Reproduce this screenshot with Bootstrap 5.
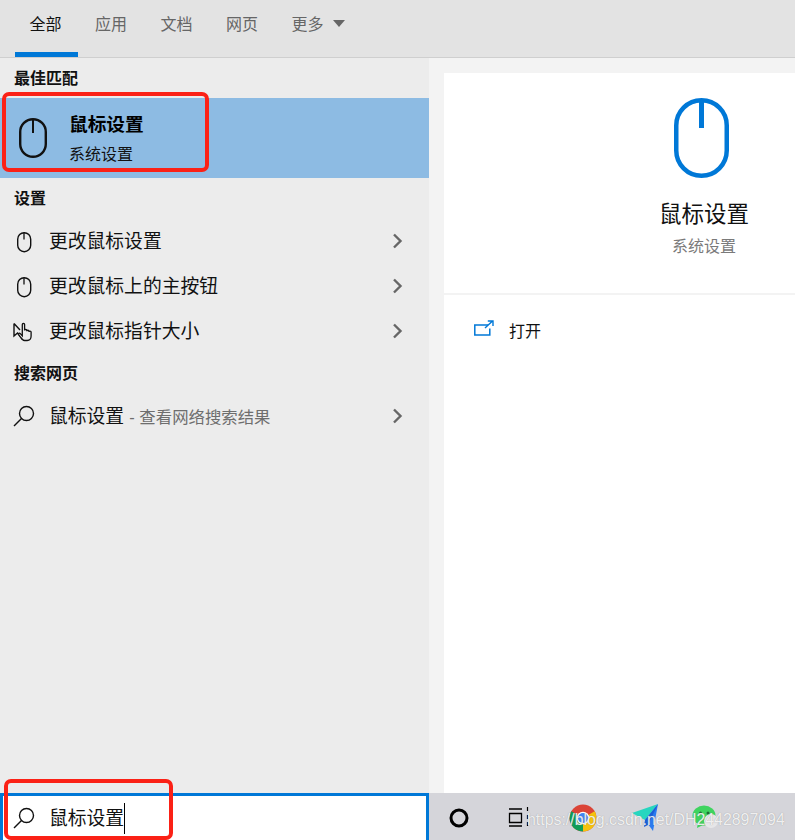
<!doctype html>
<html lang="zh-CN">
<head>
<meta charset="utf-8">
<title>鼠标设置</title>
<link href="https://cdn.jsdelivr.net/npm/bootstrap@5.3.0/dist/css/bootstrap.min.css" rel="stylesheet">
<style>
html,body{margin:0;height:840px;overflow:hidden;background:#f3f3f3;}
body{font-family:"Liberation Sans","Noto Sans CJK SC",sans-serif;color:#111;}
.shell{width:795px;height:840px;overflow:hidden;}
.tabbar{height:58px;background:#e3e3e3;border-bottom:1px solid #cfcfcf;padding-left:15px;gap:2.500px;}
.tabitem{width:63px;height:57px;padding:14px 2px 0 0;text-align:center;font-size:16px;line-height:21px;color:#666;flex:none;}
.tabitem.on{color:#111;border-bottom:5px solid #0078d7;}
.tabmore{width:auto;padding-left:14.500px;}
.caret-tri{display:inline-block;border-left:6px solid transparent;border-right:6px solid transparent;border-top:7px solid #666;margin-left:9px;vertical-align:3px;}
.mainarea{height:782px;}
.leftcol{width:429px;background:#ececec;flex:none;}
.grouphead{height:40px;padding:1px 0 0 14px;font-size:16px;font-weight:700;line-height:40px;color:#111;}
.bestrow{height:80px;background:#8dbbe3;padding-left:19px;}
.besttitle{font-size:18.700px;font-weight:700;line-height:26px;color:#000;margin-top:1px;}
.bestsub{font-size:16px;line-height:22px;color:#111;margin-top:6px;}
.bestico{width:28px;margin-right:22px;}
.rowitem{height:45px;padding-left:12px;padding-right:26px;font-size:18.800px;color:#111;}
.rowico{width:24px;height:24px;margin-right:13px;flex:none;}
.rowlabel{flex-grow:1;white-space:nowrap;padding-top:4px;}
.hintgray{font-size:16.400px;color:#6e6e6e;}
.searchbox{height:47px;margin-top:auto;background:#fff;border:3px solid #0078d7;border-bottom:0;padding-left:9px;font-size:18.800px;}
.searchword{padding-top:2px;}
.cursorbar{display:inline-block;width:1px;height:31px;background:#000;margin-top:1px;}
.rightcol{flex:1 1 0;}
.rightinner{margin:15px 0 0 15px;background:#fff;height:720px;}
.heroblock{height:222px;border-bottom:2px solid #f3f3f3;padding-left:160px;}
.herostack{width:200px;text-align:center;padding-top:25px;}
.heroart{margin-right:5px;}
.herotitle{font-size:22.500px;line-height:30px;color:#111;margin-top:22px;}
.herosub{font-size:16px;line-height:22px;color:#7a7a7a;margin-top:6px;}
.openrow{padding:25px 0 0 30px;font-size:16px;line-height:22px;color:#111;}
.opentext{margin:1px 0 0 -1px;}
.taskstrip{height:47px;background:#d5d5da;position:relative;}
.taskico{position:absolute;top:0;}
.circleico{left:20px;}
.viewico{left:78px;}
.chromeico{left:139px;}
.planeico{left:202px;}
.chatico{left:262px;}
.redmark{position:absolute;border:4px solid #fb2116;border-radius:7px;pointer-events:none;}
.markone{left:2px;top:92px;width:207px;height:80px;}
.marktwo{left:4px;top:779px;width:169px;height:61px;}
.wmark{position:absolute;left:527px;top:810px;font-family:"Liberation Sans",sans-serif;font-size:15.880px;line-height:20px;color:rgba(255,255,255,.85);text-shadow:0 0 1px rgba(120,120,120,.7);white-space:nowrap;}
.mouseline{fill:none;stroke:#111;}
</style>
</head>
<body>
<div class="shell position-relative">
  <div class="tabbar d-flex">
    <div class="tabitem on">全部</div>
    <div class="tabitem">应用</div>
    <div class="tabitem">文档</div>
    <div class="tabitem">网页</div>
    <div class="tabitem tabmore">更多<span class="caret-tri"></span></div>
  </div>
  <div class="mainarea d-flex">
    <div class="leftcol d-flex flex-column">
      <div class="grouphead">最佳匹配</div>
      <div class="bestrow d-flex align-items-center">
        <svg class="bestico" width="28" height="40" viewBox="0 0 28 40"><rect x="1.200" y="1.200" width="25.600" height="37.600" rx="12.800" class="mouseline" stroke-width="2.400"/><path d="M14 1v14" class="mouseline" stroke-width="2"/></svg>
        <div>
          <div class="besttitle">鼠标设置</div>
          <div class="bestsub">系统设置</div>
        </div>
      </div>
      <div class="grouphead">设置</div>
      <div class="rowitem d-flex align-items-center">
        <svg class="rowico" viewBox="0 0 24 24"><rect x="5.700" y="3.700" width="13" height="19" rx="6.500" class="mouseline" stroke-width="1.400"/><path d="M12 3.500v7" class="mouseline" stroke-width="1.300"/></svg>
        <span class="rowlabel">更改鼠标设置</span>
        <svg width="11" height="16" viewBox="0 0 11 16"><path d="M2 1.500 8.500 8 2 14.500" fill="none" stroke="#666" stroke-width="2.400"/></svg>
      </div>
      <div class="rowitem d-flex align-items-center">
        <svg class="rowico" viewBox="0 0 24 24"><rect x="5.700" y="3.700" width="13" height="19" rx="6.500" class="mouseline" stroke-width="1.400"/><path d="M12 3.500v7" class="mouseline" stroke-width="1.300"/></svg>
        <span class="rowlabel">更改鼠标上的主按钮</span>
        <svg width="11" height="16" viewBox="0 0 11 16"><path d="M2 1.500 8.500 8 2 14.500" fill="none" stroke="#666" stroke-width="2.400"/></svg>
      </div>
      <div class="rowitem d-flex align-items-center">
        <svg class="rowico" viewBox="0 0 24 24"><path d="M2 4.500 2 17l3.500-3 5 6.500M2 4.500l6 6.500" class="mouseline" stroke-width="1.400"/><path d="M10.500 20.500c-1.500-1.800-3-3.500-3.800-5-.5-1 .8-1.800 1.600-.9l2 2.200V5.500c0-1.500 2.300-1.500 2.300 0v6c0-1.400 2.200-1.400 2.200 0v.7c0-1.300 2.200-1.300 2.200 0v.8c0-1.200 2.100-1.200 2.100 0v4c0 2.600-1.500 4.500-4 4.500h-2.500c-.8 0-1.500-.3-2.100-1z" fill="#ececec" stroke="#111" stroke-width="1.300"/></svg>
        <span class="rowlabel">更改鼠标指针大小</span>
        <svg width="11" height="16" viewBox="0 0 11 16"><path d="M2 1.500 8.500 8 2 14.500" fill="none" stroke="#666" stroke-width="2.400"/></svg>
      </div>
      <div class="grouphead">搜索网页</div>
      <div class="rowitem d-flex align-items-center">
        <svg class="rowico" viewBox="0 0 24 24"><circle cx="14.500" cy="9.500" r="7" class="mouseline" stroke-width="1.400"/><path d="M9.500 14.500 2 22" class="mouseline" stroke-width="1.500"/></svg>
        <span class="rowlabel">鼠标设置 <span class="hintgray">- 查看网络搜索结果</span></span>
        <svg width="11" height="16" viewBox="0 0 11 16"><path d="M2 1.500 8.500 8 2 14.500" fill="none" stroke="#666" stroke-width="2.400"/></svg>
      </div>
      <div class="searchbox d-flex align-items-center">
        <svg class="rowico" viewBox="0 0 24 24"><circle cx="14.500" cy="9.500" r="7" class="mouseline" stroke-width="1.400"/><path d="M9.500 14.500 2 22" class="mouseline" stroke-width="1.500"/></svg>
        <span class="searchword">鼠标设置</span><span class="cursorbar"></span>
      </div>
    </div>
    <div class="rightcol d-flex flex-column">
      <div class="rightinner">
        <div class="heroblock">
          <div class="herostack">
            <svg class="heroart" width="56" height="80" viewBox="0 0 56 80"><rect x="2.250" y="2.250" width="50.500" height="75.500" rx="25.200" fill="none" stroke="#0078d7" stroke-width="4.500"/><path d="M27.500 2v28" stroke="#0078d7" stroke-width="5" fill="none"/></svg>
            <div class="herotitle">鼠标设置</div>
            <div class="herosub">系统设置</div>
          </div>
        </div>
        <div class="openrow d-flex">
          <svg width="20" height="16" viewBox="0 0 20 16" class="me-3"><path d="M14 5H.8v10h15V8.500" fill="none" stroke="#0078d7" stroke-width="1.500"/><path d="M11 8 18 1.500M13.800 1H19v5" fill="none" stroke="#0078d7" stroke-width="1.400"/></svg>
          <span class="opentext">打开</span>
        </div>
      </div>
      <div class="taskstrip mt-auto">
        <svg class="taskico circleico" width="20" height="47" viewBox="0 0 20 47"><circle cx="10" cy="25" r="8" fill="none" stroke="#000" stroke-width="3"/></svg>
        <svg class="taskico viewico" width="24" height="47" viewBox="0 0 24 47"><path d="M2 16h13M2 33h13M2.500 20.500h12v9h-12z" fill="none" stroke="#000" stroke-width="1.300"/><path d="M20.500 14v4M20.500 22v4M20.500 29v4" stroke="#000" stroke-width="1.200"/></svg>
        <svg class="taskico chromeico" width="30" height="47" viewBox="0 0 30 47">
          <circle cx="15" cy="25" r="13.500" fill="#db4437"/>
          <path d="M15 25 26.700 18.300A13.500 13.500 0 0 1 15 38.500z" fill="#f4c20d"/>
          <path d="M15 25 15 38.500A13.500 13.500 0 0 1 3.300 18.300z" fill="#0f9d58"/>
          <circle cx="15" cy="25" r="6.300" fill="#fff"/><circle cx="15" cy="25" r="5" fill="#4285f4"/>
        </svg>
        <svg class="taskico planeico" width="28" height="47" viewBox="0 0 28 47">
          <path d="M1 20 27 11 14 27z" fill="#27d6bf"/>
          <path d="M27 11 14 27l8 11z" fill="#2a7bf0"/>
          <path d="M27 11 14 27l-1 7 4-2z" fill="#1c5fd6"/>
        </svg>
        <svg class="taskico chatico" width="28" height="47" viewBox="0 0 28 47">
          <ellipse cx="13" cy="22.500" rx="11.500" ry="10" fill="#3fd45f"/><path d="M7 30l-1 5 6-3z" fill="#3fd45f"/>
          <circle cx="9.500" cy="20" r="1.500" fill="#226b35"/><circle cx="17" cy="20" r="1.500" fill="#226b35"/>
          <circle cx="20" cy="28" r="7" fill="#e6e6e8"/>
        </svg>
      </div>
    </div>
  </div>
  <div class="redmark markone"></div>
  <div class="redmark marktwo"></div>
  <div class="wmark">https://blog.csdn.net/DH2442897094</div>
</div>
<script src="https://cdn.jsdelivr.net/npm/bootstrap@5.3.0/dist/js/bootstrap.bundle.min.js"></script>
</body>
</html>
